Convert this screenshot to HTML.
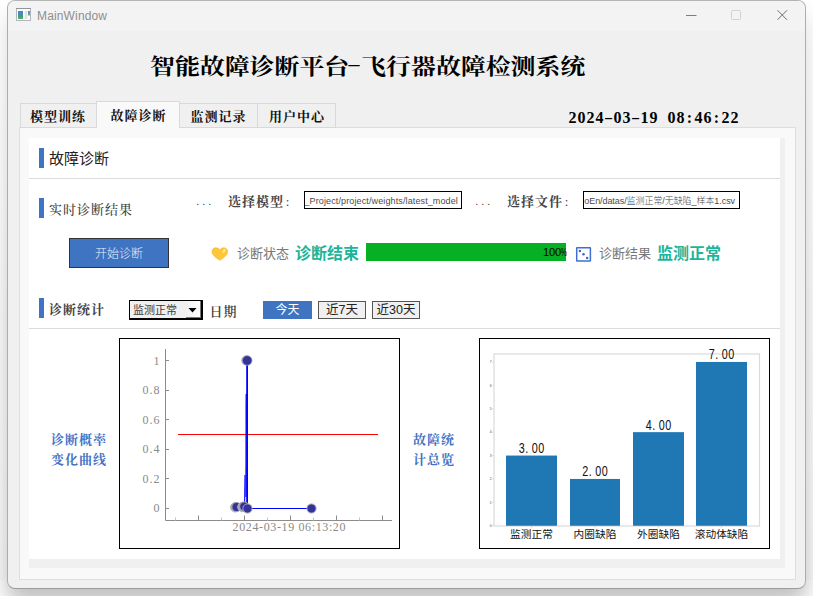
<!DOCTYPE html>
<html lang="zh-CN">
<head>
<meta charset="utf-8">
<title>MainWindow</title>
<style>
*{box-sizing:border-box;margin:0;padding:0}
html,body{width:813px;height:596px;overflow:hidden;background:#fff}
body{position:relative;font-family:"Liberation Sans","Noto Sans CJK SC",sans-serif;}
.abs{position:absolute;white-space:nowrap;line-height:1}
.serif{font-family:"Liberation Serif","Noto Serif CJK SC",serif}
.sans{font-family:"Liberation Sans","Noto Sans CJK SC",sans-serif}
#win{position:absolute;left:7px;top:0;width:799px;height:589px;background:#f0f0f0;border:1px solid #adadad;border-top-color:#b4b4b4;border-bottom-color:#9c9c9c;border-radius:8px;box-shadow:0 14px 21px rgba(0,0,0,.25);overflow:hidden}
#tbar{position:absolute;left:0;top:0;width:100%;height:30px;background:#f3f3f3}
#page > *{position:absolute}
#page{position:absolute;left:0;top:0;width:813px;height:596px}
.tab{position:absolute;background:#f0f0f0;border:1px solid #d9d9d9;border-bottom:none;font-weight:700;font-size:13px;letter-spacing:1px;text-indent:1px;color:#111;text-align:center}
.bar{position:absolute;width:5px;height:20px;background:#3e74c1}
.hline{position:absolute;height:1px;background:#dcdcdc}
.btn{position:absolute;border:1px solid #555;background:#f0f0f0;color:#222;font-size:12.500px;text-align:center}
#clock span{display:inline-block;width:9px;text-align:center}
.inp{position:absolute;border:1px solid #000;background:#fff;overflow:hidden}
.inp span{position:absolute;top:.7px;line-height:16px;font-size:9px;color:#4a4a4a;white-space:nowrap}
#pct span{display:inline-block;width:6px;text-align:center}
#pct span i{margin:0 -3px}
#clock span.d{transform:scale(1.7,.85)}
.sfix{position:absolute;top:0;width:7px;height:330px;background:linear-gradient(to bottom,rgba(255,255,255,.5),rgba(255,255,255,.36) 20%,rgba(255,255,255,0));z-index:5}
.sfix2{position:absolute;top:330px;width:7px;height:250px;background:linear-gradient(to bottom,rgba(0,0,0,0),rgba(0,0,0,.02));z-index:5}
</style>
</head>
<body>
<div class="sfix" style="left:0"></div><div class="sfix" style="left:806px"></div>
<div class="sfix2" style="left:0"></div><div class="sfix2" style="left:806px"></div>
<div id="win"><div id="tbar"></div></div>
<div id="page">
<!-- title bar -->
<svg class="abs" style="left:16px;top:8px" width="15" height="13" viewBox="0 0 15 13">
<rect x=".5" y=".5" width="14" height="12" fill="#fcfcfd" stroke="#b3b6bf"/>
<path d="M0 .5H15" stroke="#939599"/>
<rect x="2" y="3" width="5" height="2" fill="#4c84c8"/><rect x="2" y="5" width="5" height="2" fill="#448fa8"/><rect x="2" y="7" width="5" height="2" fill="#449c80"/><rect x="2" y="9" width="5" height="2" fill="#55ad5c"/>
<rect x="8.800" y="3" width="2.400" height="8" fill="#e2e2e2"/>
<rect x="12" y="3" width="2" height="2" fill="#5b90cf"/><rect x="12" y="5" width="2" height="2.500" fill="#62b07a"/>
</svg>
<div class="abs sans" id="wtitle" style="left:37px;top:10px;font-size:12px;letter-spacing:0.150px;color:#8e8e8e">MainWindow</div>
<svg class="abs" style="left:680px;top:5px" width="120" height="22" viewBox="0 0 120 22">
<path d="M6 10.5H16.5" stroke="#7d7d7d" stroke-width="1" fill="none"/>
<rect x="51.5" y="5.500" width="9" height="9" rx="1" fill="none" stroke="#d2d2d2" stroke-width="1"/>
<path d="M97.500 5.300L107 14.800M107 5.300L97.500 14.800" stroke="#6e6e6e" stroke-width="1" fill="none"/>
</svg>

<!-- main title -->
<div class="abs serif" id="title" style="left:149.500px;top:57px;font-size:21.500px;font-weight:700;color:#000;transform:scaleX(1.158);transform-origin:0 0">智能故障诊断平台<span style="display:inline-block;width:10.400px;text-align:center;transform:translate(-1px,-2.400px) scale(1.75,.8)">-</span>飞行器故障检测系统</div>
<div class="abs serif" id="clock" style="left:568px;top:110px;font-size:16px;font-weight:700;color:#000"><span>2</span><span>0</span><span>2</span><span>4</span><span class="d">-</span><span>0</span><span>3</span><span class="d">-</span><span>1</span><span>9</span><span>&nbsp;</span><span>0</span><span>8</span><span>:</span><span>4</span><span>6</span><span>:</span><span>2</span><span>2</span></div>

<!-- tabs -->
<div style="left:19px;top:127px;width:777px;height:453px;background:#f9f9f9;border:1px solid #dedede"></div>
<div class="tab serif" style="left:20px;top:103px;width:77px;height:25px;line-height:26px;border-bottom:1px solid #d9d9d9;text-indent:-1px">模型训练</div>
<div class="tab serif" style="left:179px;top:103px;width:79px;height:25px;line-height:26px;border-bottom:1px solid #d9d9d9;border-left:none">监测记录</div>
<div class="tab serif" style="left:257px;top:103px;width:79px;height:25px;line-height:26px;border-bottom:1px solid #d9d9d9">用户中心</div>
<div class="tab serif" style="left:96px;top:101px;width:84px;height:27px;line-height:27px;background:#f9f9f9">故障诊断</div>

<!-- panels -->
<div style="left:29px;top:138px;width:756px;height:430px;background:#f0f0f0"></div>
<div style="left:29px;top:138px;width:751px;height:421px;background:#fff"></div>

<div class="bar" style="left:39px;top:148px"></div>
<div class="abs sans" id="h1" style="left:49px;top:151px;font-size:15px;color:#222">故障诊断</div>
<div class="hline" style="left:29px;top:178px;width:751px"></div>

<div class="bar" style="left:39px;top:198px"></div>
<div class="abs serif" id="h2" style="left:49px;top:203px;font-size:13px;letter-spacing:1px;color:#3e3e3e;font-weight:500">实时诊断结果</div>

<div class="abs serif" id="dots1" style="left:196.500px;top:197px;font-size:10px;color:#222;letter-spacing:3.500px">...</div>
<div class="abs serif" id="lblm" style="left:228px;top:195px;font-size:13px;letter-spacing:1px;font-weight:700;color:#444">选择模型<span style="display:inline-block;width:7px;text-align:center;font-weight:400;letter-spacing:0">:</span></div>
<div class="inp sans" id="inpm" style="left:304px;top:191px;width:158px;height:18px"><span id="inpmt" style="right:3px;letter-spacing:.12px">e_Project/project/weights/latest_model</span></div>
<div class="abs serif" id="dots2" style="left:475.500px;top:197px;font-size:10px;color:#222;letter-spacing:3.500px">...</div>
<div class="abs serif" id="lblf" style="left:507px;top:195px;font-size:13px;letter-spacing:1px;font-weight:700;color:#444">选择文件<span style="display:inline-block;width:7px;text-align:center;font-weight:400;letter-spacing:0">:</span></div>
<div class="inp sans" id="inpf" style="left:583px;top:191px;width:157px;height:18px"><span id="inpft" style="right:4px;font-weight:300;letter-spacing:-.07px">oEn/datas/监测正常/无缺陷_样本1.csv</span></div>

<!-- start button -->
<div class="abs sans" id="start" style="left:69px;top:238px;width:100px;height:30px;background:#3e74c1;border:1px solid #333;color:#e9eef8;font-weight:300;font-size:12px;line-height:31px;text-align:center">开始诊断</div>

<!-- heart -->
<svg class="abs" style="left:211px;top:247.300px" width="17.300" height="14.200" viewBox="0 0 18 15" preserveAspectRatio="none">
<path d="M9.200 14.100 C6.500 12.300 1 8.800 1 4.900 C1 2.500 2.800 0.800 5 0.800 C6.700 0.800 8.300 1.700 9.200 3.100 C10.100 1.700 11.600 0.800 13.300 0.800 C15.500 0.800 17.300 2.500 17.300 4.900 C17.300 8.800 11.900 12.300 9.200 14.100Z" fill="#fdc838" stroke="#f8b02c" stroke-width=".6"/>
<ellipse cx="13.600" cy="4.300" rx="1.300" ry="2.300" transform="rotate(35 13.600 4.300)" fill="#fee594"/>
</svg>
<div class="abs sans" id="st1" style="left:237px;top:247px;font-size:13px;color:#777">诊断状态</div>
<div class="abs sans" id="st2" style="left:295px;top:246px;font-size:16px;font-weight:700;color:#1bb59a">诊断结束</div>
<div style="left:366px;top:243px;width:200px;height:18px;background:#06b025"></div>
<div class="abs sans" id="pct" style="left:543px;top:247px;font-size:11px;color:#000"><span>1</span><span>0</span><span>0</span><span><i style="display:inline-block;font-style:normal;transform:scaleX(.62)">%</i></span></div>
<!-- dice -->
<svg class="abs" style="left:575px;top:246px" width="17" height="17" viewBox="0 0 17 17">
<rect x="1.700" y="1.700" width="13.700" height="13.400" rx=".4" fill="#fff" stroke="#3f6fd0" stroke-width="1.500"/>
<circle cx="4.900" cy="5" r="1.250" fill="#3b66c4"/><circle cx="8.500" cy="8.300" r="1.250" fill="#3b66c4"/><circle cx="12.100" cy="12" r="1.250" fill="#3b66c4"/>
</svg>
<div class="abs sans" id="rs1" style="left:599px;top:247px;font-size:13px;color:#777">诊断结果</div>
<div class="abs sans" id="rs2" style="left:657px;top:245.500px;font-size:16px;font-weight:700;color:#1bb59a">监测正常</div>

<!-- stats row -->
<div class="bar" style="left:39px;top:298px"></div>
<div class="abs serif" id="h3" style="left:49px;top:302.500px;font-size:13px;letter-spacing:1px;font-weight:700;color:#444">诊断统计</div>
<div class="abs sans" id="combo" style="left:129px;top:300px;width:74px;height:20px;border:1px solid #000;border-right-width:2px;border-bottom-width:2px;background:#f0f0f0;font-size:11px;color:#3a3a3a;line-height:18px;padding-left:3px">监测正常
 <div style="position:absolute;right:0;top:0;width:15px;height:17px;background:linear-gradient(90deg,#f0f0f0,#fff);border-right:1px solid #777;border-bottom:1px solid #777"></div>
 <svg style="position:absolute;right:4px;top:7px" width="9" height="5" viewBox="0 0 9 5"><path d="M0.500 0H8.500L4.500 4.500Z" fill="#000"/></svg>
</div>
<div class="abs serif" id="date" style="left:209.500px;top:305px;font-size:13px;letter-spacing:1px;color:#3c3c3c;font-weight:600">日期</div>
<div class="abs sans" id="b1" style="left:263px;top:301px;width:49px;height:18px;background:#3e74c1;color:#fff;font-size:12px;line-height:18px;text-align:center">今天</div>
<div class="btn abs sans" id="b2" style="left:318px;top:301px;width:48px;height:18px;line-height:16px">近7天</div>
<div class="btn abs sans" id="b3" style="left:372px;top:301px;width:48px;height:18px;line-height:16px">近30天</div>
<div class="hline" style="left:29px;top:328px;width:751px"></div>

<!-- chart 1 -->
<div class="abs serif" id="c1l" style="left:51px;top:430px;font-size:13px;letter-spacing:1px;font-weight:700;color:#4472c4;line-height:20px;white-space:normal;width:60px">诊断概率<br>变化曲线</div>
<svg class="abs" id="chart1" style="left:119px;top:338px" width="282" height="211" viewBox="119 338 282 211">
<rect x="119.500" y="338.500" width="280" height="210" fill="#fff" stroke="#000" stroke-width="1"/>
<path d="M165.500 349V520.500H392" fill="none" stroke="#8c8c8c" stroke-width="1"/>
<path d="M165.500 360.5H169 M165.500 390.5H169 M165.500 419.5H169 M165.500 449.5H169 M165.500 478.5H169 M165.500 508.5H169" stroke="#8c8c8c" stroke-width="1" fill="none"/>
<path d="M198.5 520.500V515.500 M244.5 520.500V515.500 M290.5 520.500V515.500 M336.5 520.500V515.500 M382.5 520.500V515.500" stroke="#8c8c8c" stroke-width="1" fill="none"/>
<path d="M175.5 520.500V517.500 M221.5 520.500V517.500 M267.5 520.500V517.500 M313.5 520.500V517.500 M359.5 520.500V517.500" stroke="#c4c4c4" stroke-width="1" fill="none"/>
<g font-family="'Liberation Serif','Noto Serif CJK SC',serif" font-size="12" fill="#8a8a8a" text-anchor="end">
<text x="159.500" y="364.5" textLength="5" lengthAdjust="spacing">1</text>
<text x="159.500" y="394.0" textLength="17" lengthAdjust="spacing">0.8</text>
<text x="159.500" y="423.5" textLength="17" lengthAdjust="spacing">0.6</text>
<text x="159.500" y="453.0" textLength="17" lengthAdjust="spacing">0.4</text>
<text x="159.500" y="482.5" textLength="17" lengthAdjust="spacing">0.2</text>
<text x="159.500" y="512.0" textLength="5" lengthAdjust="spacing">0</text>
</g>
<text x="289" y="530.700" font-family="'Liberation Serif','Noto Serif CJK SC',serif" font-size="12" fill="#8a8a8a" text-anchor="middle" textLength="113" lengthAdjust="spacing">2024-03-19 06:13:20</text>
<path d="M178 434.500H378" stroke="#f00" stroke-width="1" fill="none"/>
<path d="M247.100 361V508" stroke="#0000ff" stroke-width="1.800" fill="none"/>
<path d="M246.200 394L246 497" stroke="#0000ff" stroke-width="1.300" fill="none"/>
<path d="M245 475L244.600 506" stroke="#0000ff" stroke-width="1.100" fill="none"/>
<path d="M236.500 507L244 506.500L247.500 508.500H311.500" stroke="#0000ff" stroke-width="1" fill="none"/>
<circle cx="235.2" cy="507.3" r="4.700" fill="#a9a9b8" stroke="#b4b4b4" stroke-width="1"/><circle cx="236.5" cy="507" r="4.600" fill="#333399" stroke="#a8a8b8" stroke-width="1"/>
<circle cx="242.4" cy="507.0" r="4.700" fill="#a9a9b8" stroke="#b4b4b4" stroke-width="1"/><circle cx="244.25" cy="506.5" r="4.600" fill="#333399" stroke="#a8a8b8" stroke-width="1"/>
<circle cx="247.5" cy="508.5" r="4.600" fill="#333399" stroke="#a8a8b8" stroke-width="1"/>
<circle cx="311.5" cy="508.5" r="4.600" fill="#333399" stroke="#a8a8b8" stroke-width="1"/>
<circle cx="246.2" cy="360.5" r="4.900" fill="#b0b0bc"/><circle cx="247.2" cy="360.5" r="4.800" fill="#333399" stroke="#9c9cb4" stroke-width=".8"/>
</svg>

<!-- chart 2 -->
<div class="abs serif" id="c2l" style="left:413px;top:430px;font-size:13px;letter-spacing:1px;font-weight:700;color:#4472c4;line-height:20px;white-space:normal;width:46px">故障统<br>计总览</div>
<svg class="abs" id="chart2" style="left:479px;top:338px" width="292" height="211" viewBox="479 338 292 211">
<rect x="479.500" y="338.500" width="290" height="210" fill="#fff" stroke="#000" stroke-width="1"/>
<rect x="494" y="354" width="265.500" height="172" fill="none" stroke="#dadada" stroke-width="1.200"/>
<rect x="506" y="455.55" width="51" height="70.20" fill="#1f77b4"/>
<rect x="570" y="478.95" width="50" height="46.80" fill="#1f77b4"/>
<rect x="633" y="432.15" width="51" height="93.60" fill="#1f77b4"/>
<rect x="696" y="361.95" width="51" height="163.80" fill="#1f77b4"/>
<g font-family="'Liberation Sans','Noto Sans CJK SC',sans-serif" font-size="14.200" fill="#111">
<text transform="translate(521.75 453.05) scale(0.76 1)" text-anchor="middle">3</text>
<text transform="translate(526.75 453.05) scale(0.76 1)" text-anchor="middle">.</text>
<text transform="translate(534.75 453.05) scale(0.76 1)" text-anchor="middle">0</text>
<text transform="translate(541.25 453.05) scale(0.76 1)" text-anchor="middle">0</text>
<text transform="translate(585.25 476.45) scale(0.76 1)" text-anchor="middle">2</text>
<text transform="translate(590.25 476.45) scale(0.76 1)" text-anchor="middle">.</text>
<text transform="translate(598.25 476.45) scale(0.76 1)" text-anchor="middle">0</text>
<text transform="translate(604.75 476.45) scale(0.76 1)" text-anchor="middle">0</text>
<text transform="translate(648.75 429.65) scale(0.76 1)" text-anchor="middle">4</text>
<text transform="translate(653.75 429.65) scale(0.76 1)" text-anchor="middle">.</text>
<text transform="translate(661.75 429.65) scale(0.76 1)" text-anchor="middle">0</text>
<text transform="translate(668.25 429.65) scale(0.76 1)" text-anchor="middle">0</text>
<text transform="translate(711.75 359.45) scale(0.76 1)" text-anchor="middle">7</text>
<text transform="translate(716.75 359.45) scale(0.76 1)" text-anchor="middle">.</text>
<text transform="translate(724.75 359.45) scale(0.76 1)" text-anchor="middle">0</text>
<text transform="translate(731.25 359.45) scale(0.76 1)" text-anchor="middle">0</text>
</g>
<g font-family="'Liberation Sans','Noto Sans CJK SC',sans-serif" font-size="10.700" fill="#111" text-anchor="middle">
<text x="531.5" y="538">监测正常</text>
<text x="595.0" y="538">内圈缺陷</text>
<text x="658.5" y="538">外圈缺陷</text>
<text x="721.5" y="538">滚动体缺陷</text>
</g>
<g font-family="'Liberation Sans',sans-serif" font-size="3.300" fill="#444" text-anchor="end">
<text x="491.500" y="526.95">0</text>
<text x="491.500" y="503.55">1</text>
<text x="491.500" y="480.15">2</text>
<text x="491.500" y="456.75">3</text>
<text x="491.500" y="433.35">4</text>
<text x="491.500" y="409.95">5</text>
<text x="491.500" y="386.55">6</text>
<text x="491.500" y="363.15">7</text>
</g>
<path d="M492.300 525.75H493.500 M492.300 502.35H493.500 M492.300 478.95H493.500 M492.300 455.55H493.500 M492.300 432.15H493.500 M492.300 408.75H493.500 M492.300 385.35H493.500 M492.300 361.95H493.500" stroke="#999" stroke-width="0.400" fill="none"/>
<path d="M531.5 526.500V527.700 M595.0 526.500V527.700 M658.5 526.500V527.700 M721.5 526.500V527.700" stroke="#999" stroke-width="0.400" fill="none"/>
</svg>
</div>
</body>
</html>
